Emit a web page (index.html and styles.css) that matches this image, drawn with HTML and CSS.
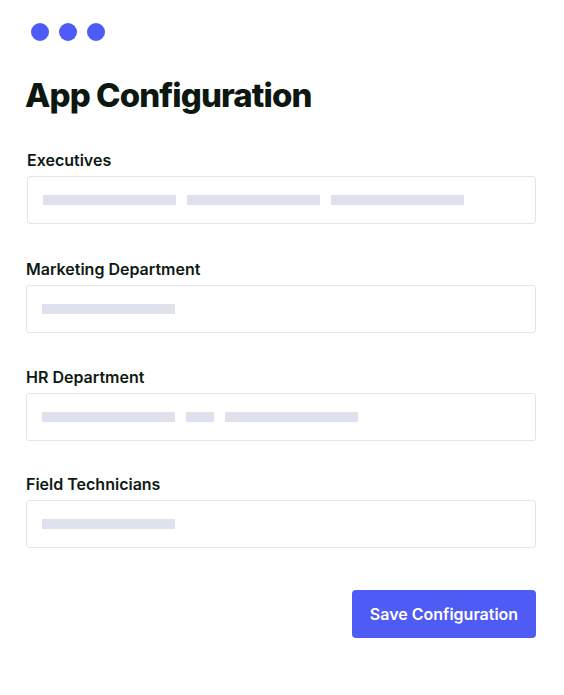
FILE: index.html
```html
<!DOCTYPE html>
<html lang="en">
<head>
<meta charset="utf-8">
<title>App Configuration</title>
<link rel="stylesheet" href="styles.css">
</head>
<body>
<div class="page">
  <div class="dots">
    <span class="dot"></span><span class="dot"></span><span class="dot"></span>
  </div>
  <h1 class="title">App Configuration</h1>
  <div class="fields">
    <div class="field field-first">
      <div class="label">Executives</div>
      <div class="box">
        <span class="bar"></span><span class="bar"></span><span class="bar"></span>
      </div>
    </div>
    <div class="field">
      <div class="label">Marketing Department</div>
      <div class="box">
        <span class="bar"></span>
      </div>
    </div>
    <div class="field">
      <div class="label">HR Department</div>
      <div class="box">
        <span class="bar"></span><span class="bar bar-short"></span><span class="bar"></span>
      </div>
    </div>
    <div class="field">
      <div class="label">Field Technicians</div>
      <div class="box">
        <span class="bar"></span>
      </div>
    </div>
  </div>
  <div class="actions">
    <button class="save" type="button">Save Configuration</button>
  </div>
</div>
</body>
</html>
```
FILE: styles.css
```css
html, body {
  margin: 0;
  padding: 0;
  background: #ffffff;
}
body {
  font-family: Inter, "Noto Sans", "Liberation Sans", sans-serif;
  color: #0d1a12;
}
.page {
  padding: 23px 28px 0 26px;
}
.dots {
  display: flex;
  gap: 10px;
  margin-left: 5px;
}
.dot {
  width: 18px;
  height: 18px;
  border-radius: 50%;
  background: #4f5bf6;
}
.title {
  margin: 34px 0 0 -1px;
  font-size: 33px;
  line-height: 40px;
  font-weight: 800;
  letter-spacing: -0.9px;
  color: #0b170f;
}
.fields {
  margin-top: 35px;
  display: flex;
  flex-direction: column;
  gap: 33.5px;
}
.field-first {
  margin-left: 1px;
  margin-bottom: 1.5px;
}
.label {
  font-size: 16px;
  line-height: 20px;
  font-weight: 600;
  color: #0d1a12;
}
.box {
  margin-top: 6px;
  height: 48px;
  box-sizing: border-box;
  border: 1px solid #e4e5e7;
  border-radius: 3px;
  display: flex;
  align-items: center;
  gap: 11px;
  padding: 0 15px;
}
.bar {
  width: 133px;
  height: 10px;
  background: #dfe1ec;
}
.bar-short {
  width: 28px;
}
.actions {
  display: flex;
  justify-content: flex-end;
  margin-top: 42px;
}
.save {
  width: 184px;
  height: 48px;
  border: none;
  border-radius: 4px;
  background: #4f5bf5;
  color: #ffffff;
  font-family: Inter, "Noto Sans", "Liberation Sans", sans-serif;
  font-size: 16px;
  font-weight: 600;
  padding: 0;
  cursor: pointer;
}
```
